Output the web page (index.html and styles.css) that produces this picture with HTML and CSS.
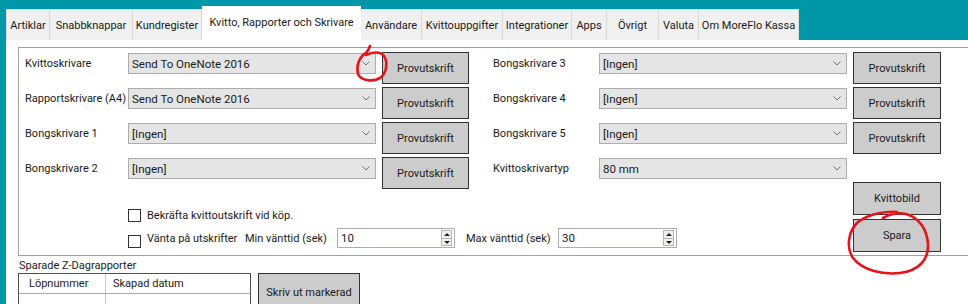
FILE: index.html
```html
<!DOCTYPE html>
<html lang="sv">
<head>
<meta charset="utf-8">
<title>Kvitto, Rapporter och Skrivare</title>
<link rel="stylesheet" href="styles.css">
</head>
<body>
<div class="screen">
  <nav class="tabs">
    <div class="tab">Artiklar</div>
    <div class="tab">Snabbknappar</div>
    <div class="tab">Kundregister</div>
    <div class="tab sel">Kvitto, Rapporter och Skrivare</div>
    <div class="tab">Användare</div>
    <div class="tab">Kvittouppgifter</div>
    <div class="tab">Integrationer</div>
    <div class="tab">Apps</div>
    <div class="tab">Övrigt</div>
    <div class="tab">Valuta</div>
    <div class="tab">Om MoreFlo Kassa</div>
  </nav>

  <main class="panel">
    <section class="frame">
      <div class="col left">
        <div class="row">
          <span class="lbl">Kvittoskrivare</span>
          <div class="combo"><span>Send To OneNote 2016</span><svg class="chev" width="8" height="5" viewBox="0 0 8 5"><path d="M0.5 0.5 L4 4 L7.5 0.5"/></svg></div>
          <button class="btn">Provutskrift</button>
        </div>
        <div class="row">
          <span class="lbl">Rapportskrivare (A4)</span>
          <div class="combo"><span>Send To OneNote 2016</span><svg class="chev" width="8" height="5" viewBox="0 0 8 5"><path d="M0.5 0.5 L4 4 L7.5 0.5"/></svg></div>
          <button class="btn">Provutskrift</button>
        </div>
        <div class="row">
          <span class="lbl">Bongskrivare 1</span>
          <div class="combo"><span>[Ingen]</span><svg class="chev" width="8" height="5" viewBox="0 0 8 5"><path d="M0.5 0.5 L4 4 L7.5 0.5"/></svg></div>
          <button class="btn">Provutskrift</button>
        </div>
        <div class="row">
          <span class="lbl">Bongskrivare 2</span>
          <div class="combo"><span>[Ingen]</span><svg class="chev" width="8" height="5" viewBox="0 0 8 5"><path d="M0.5 0.5 L4 4 L7.5 0.5"/></svg></div>
          <button class="btn">Provutskrift</button>
        </div>

        <div class="checks">
          <div class="check c1">
            <span class="box"></span><span>Bekräfta kvittoutskrift vid köp.</span>
          </div>
          <div class="check c2">
            <span class="box"></span><span class="cbtext">Vänta på utskrifter</span>
            <span class="minlbl">Min vänttid (sek)</span>
            <div class="spin s1"><span class="val">10</span><span class="arrows"><span class="up"></span><span class="down"></span></span></div>
            <span class="maxlbl">Max vänttid (sek)</span>
            <div class="spin s2"><span class="val">30</span><span class="arrows"><span class="up"></span><span class="down"></span></span></div>
          </div>
        </div>
      </div>

      <div class="col right">
        <div class="row">
          <span class="lbl">Bongskrivare 3</span>
          <div class="combo"><span>[Ingen]</span><svg class="chev" width="8" height="5" viewBox="0 0 8 5"><path d="M0.5 0.5 L4 4 L7.5 0.5"/></svg></div>
          <button class="btn">Provutskrift</button>
        </div>
        <div class="row">
          <span class="lbl">Bongskrivare 4</span>
          <div class="combo"><span>[Ingen]</span><svg class="chev" width="8" height="5" viewBox="0 0 8 5"><path d="M0.5 0.5 L4 4 L7.5 0.5"/></svg></div>
          <button class="btn">Provutskrift</button>
        </div>
        <div class="row">
          <span class="lbl">Bongskrivare 5</span>
          <div class="combo"><span>[Ingen]</span><svg class="chev" width="8" height="5" viewBox="0 0 8 5"><path d="M0.5 0.5 L4 4 L7.5 0.5"/></svg></div>
          <button class="btn">Provutskrift</button>
        </div>
        <div class="row short">
          <span class="lbl">Kvittoskrivartyp</span>
          <div class="combo"><span>80 mm</span><svg class="chev" width="8" height="5" viewBox="0 0 8 5"><path d="M0.5 0.5 L4 4 L7.5 0.5"/></svg></div>
        </div>
        <button class="btn side">Kvittobild</button>
        <button class="btn side spara">Spara</button>
      </div>
    </section>

    <section class="saved">
      <div class="saved-title">Sparade Z-Dagrapporter</div>
      <div class="saved-body">
        <div class="grid">
          <div class="grow head"><span class="gc g1">Löpnummer</span><span class="gc g2">Skapad datum</span></div>
          <div class="grow"><span class="gc g1"></span><span class="gc g2"></span></div>
        </div>
        <button class="btn print">Skriv ut markerad</button>
      </div>
    </section>
  </main>

  <svg class="annot" width="968" height="304" viewBox="0 0 968 304">
    <path d="M370,46 C369,49 368,51 366,53 C359,57 356,66 358,74 C361,81 373,82 380,78 C387,73 388,62 384,56 C380,51 372,52 366,55"/>
    <path d="M897,212 C888,211 870,213 858,222 C848,231 846,248 853,258 C862,270 882,275 900,273 C918,271 929,260 928,244 C927,230 920,218 906,214 C898,212 890,214 883,218"/>
  </svg>
</div>
</body>
</html>
```

FILE: styles.css
```css
* { box-sizing: border-box; }

html, body { margin: 0; padding: 0; }

body {
  width: 968px;
  height: 304px;
  overflow: hidden;
  background: #0098a9;
  font-family: Roboto, "Liberation Sans", Arial, sans-serif;
  font-size: 11px;
  color: #1a1a1a;
}

.screen {
  position: relative;
  width: 968px;
  height: 304px;
}

/* ---------- tabs ---------- */
.tabs {
  display: flex;
  align-items: flex-end;
  height: 40px;
  padding-left: 6px;
}

.tab {
  height: 31px;
  background: #f0f0f0;
  border: 1px solid #d9d9d9;
  border-left: none;
  border-bottom: none;
  display: flex;
  align-items: center;
  justify-content: center;
  font-size: 11px;
  white-space: nowrap;
  color: #1a1a1a;
}

.tab:first-child { border-left: 1px solid #d9d9d9; }

.tab.sel {
  height: 34px;
  background: #fff;
  border: none;
  padding-bottom: 2px;
}

.tab:nth-child(1)  { width: 44px; }
.tab:nth-child(2)  { width: 83px; }
.tab:nth-child(3)  { width: 69px; }
.tab:nth-child(4)  { width: 159px; }
.tab:nth-child(5)  { width: 61px; }
.tab:nth-child(6)  { width: 81px; }
.tab:nth-child(7)  { width: 69px; }
.tab:nth-child(8)  { width: 35px; }
.tab:nth-child(9)  { width: 52px; }
.tab:nth-child(10) { width: 40px; }
.tab:nth-child(11) { width: 100px; }

/* ---------- panel ---------- */
.panel {
  background: #fff;
  margin-left: 6px;
  height: 264px;
  padding: 7px 0 0 12px;
}

.frame {
  display: flex;
  align-items: flex-start;
  width: 962px;
  height: 209px;
  border: 1px solid #a0a0a0;
  border-right: none;
  padding: 4px 0 0 6px;
}

.col { display: flex; flex-direction: column; }
.col.left { width: 444px; }
.col.right { width: 448px; margin-left: 24px; }

.row {
  display: flex;
  align-items: flex-start;
  height: 32px;
  margin-bottom: 3px;
  flex-shrink: 0;
}
.row.short { height: 22px; }

.lbl {
  width: 103px;
  margin-top: 1px;
  line-height: 21px;
  white-space: nowrap;
}
.right .lbl { width: 106px; }

.combo {
  width: 248px;
  height: 21px;
  margin-top: 1px;
  margin-right: 6px;
  background: #e5e5e5;
  border: 1px solid #adadad;
  display: flex;
  align-items: center;
  justify-content: space-between;
  padding: 0 5px 0 3px;
  font-size: 11.5px;
  color: #1a1a1a;
  white-space: nowrap;
}

.chev path {
  fill: none;
  stroke: #6e6e6e;
  stroke-width: 1;
}

.btn {
  width: 87px;
  height: 32px;
  padding: 0;
  background: #cccccc;
  border: 1px solid #333;
  border-radius: 0;
  font-family: inherit;
  font-size: 11px;
  color: #1a1a1a;
}
.right .btn { width: 88px; }

.btn.side {
  align-self: flex-end;
  height: 33px;
}
.btn.spara { margin-top: 4px; }

/* ---------- checkboxes ---------- */
.checks {
  margin-top: 17px;
  padding-left: 103px;
}

.check {
  display: flex;
  align-items: center;
  white-space: nowrap;
}
.check.c1 { height: 13px; }
.check.c2 { height: 20px; margin-top: 6px; }
.check.c2 .box { align-self: flex-end; }

.box {
  width: 13px;
  height: 13px;
  flex-shrink: 0;
  background: #fff;
  border: 1px solid #333;
  margin-right: 6px;
}

.cbtext { width: 98px; flex-shrink: 0; }
.minlbl, .maxlbl { width: 92px; flex-shrink: 0; }

.spin {
  display: flex;
  align-items: stretch;
  justify-content: space-between;
  height: 20px;
  flex-shrink: 0;
  background: #fff;
  border: 1px solid #abadb3;
  font-size: 11.5px;
}
.spin.s1 { width: 118px; margin-right: 11px; }
.spin.s2 { width: 119px; }

.spin .val {
  padding-left: 3px;
  line-height: 18px;
}

.arrows {
  display: flex;
  flex-direction: column;
  width: 11px;
  margin: 1px 2px 1px 0;
}
.arrows span {
  flex: 1;
  position: relative;
  background: #f0f0f0;
  border: 1px solid #b5b5b5;
}
.arrows .down { border-top: none; }
.arrows span::after {
  content: "";
  position: absolute;
  left: 2px;
  top: 2px;
  border-left: 3px solid transparent;
  border-right: 3px solid transparent;
}
.arrows .up::after { border-bottom: 3px solid #222; }
.arrows .down::after { border-top: 3px solid #222; top: 2px; }

/* ---------- saved reports ---------- */
.saved-title {
  margin-top: 2px;
  padding-left: 1px;
  line-height: 15px;
  font-size: 11px;
}

.saved-body {
  display: flex;
  align-items: flex-start;
  gap: 7px;
}

.grid {
  width: 233px;
  height: 40px;
  border: 1px solid #505050;
  border-bottom: none;
}

.grow { display: flex; height: 20px; }
.grow.head { border-bottom: 1px solid #a8a8a8; }

.gc { display: flex; align-items: center; height: 100%; }
.gc.g1 { width: 87px; padding-left: 10px; border-right: 1px solid #c8c8c8; }
.gc.g2 { flex: 1; padding-left: 7px; }

.btn.print {
  width: 102px;
  height: 38px;
}

/* ---------- hand-drawn annotations ---------- */
.annot {
  position: absolute;
  left: 0;
  top: 0;
  pointer-events: none;
}
.annot path {
  fill: none;
  stroke: #e5141c;
  stroke-width: 2.6;
  stroke-linecap: round;
  stroke-linejoin: round;
}
```
